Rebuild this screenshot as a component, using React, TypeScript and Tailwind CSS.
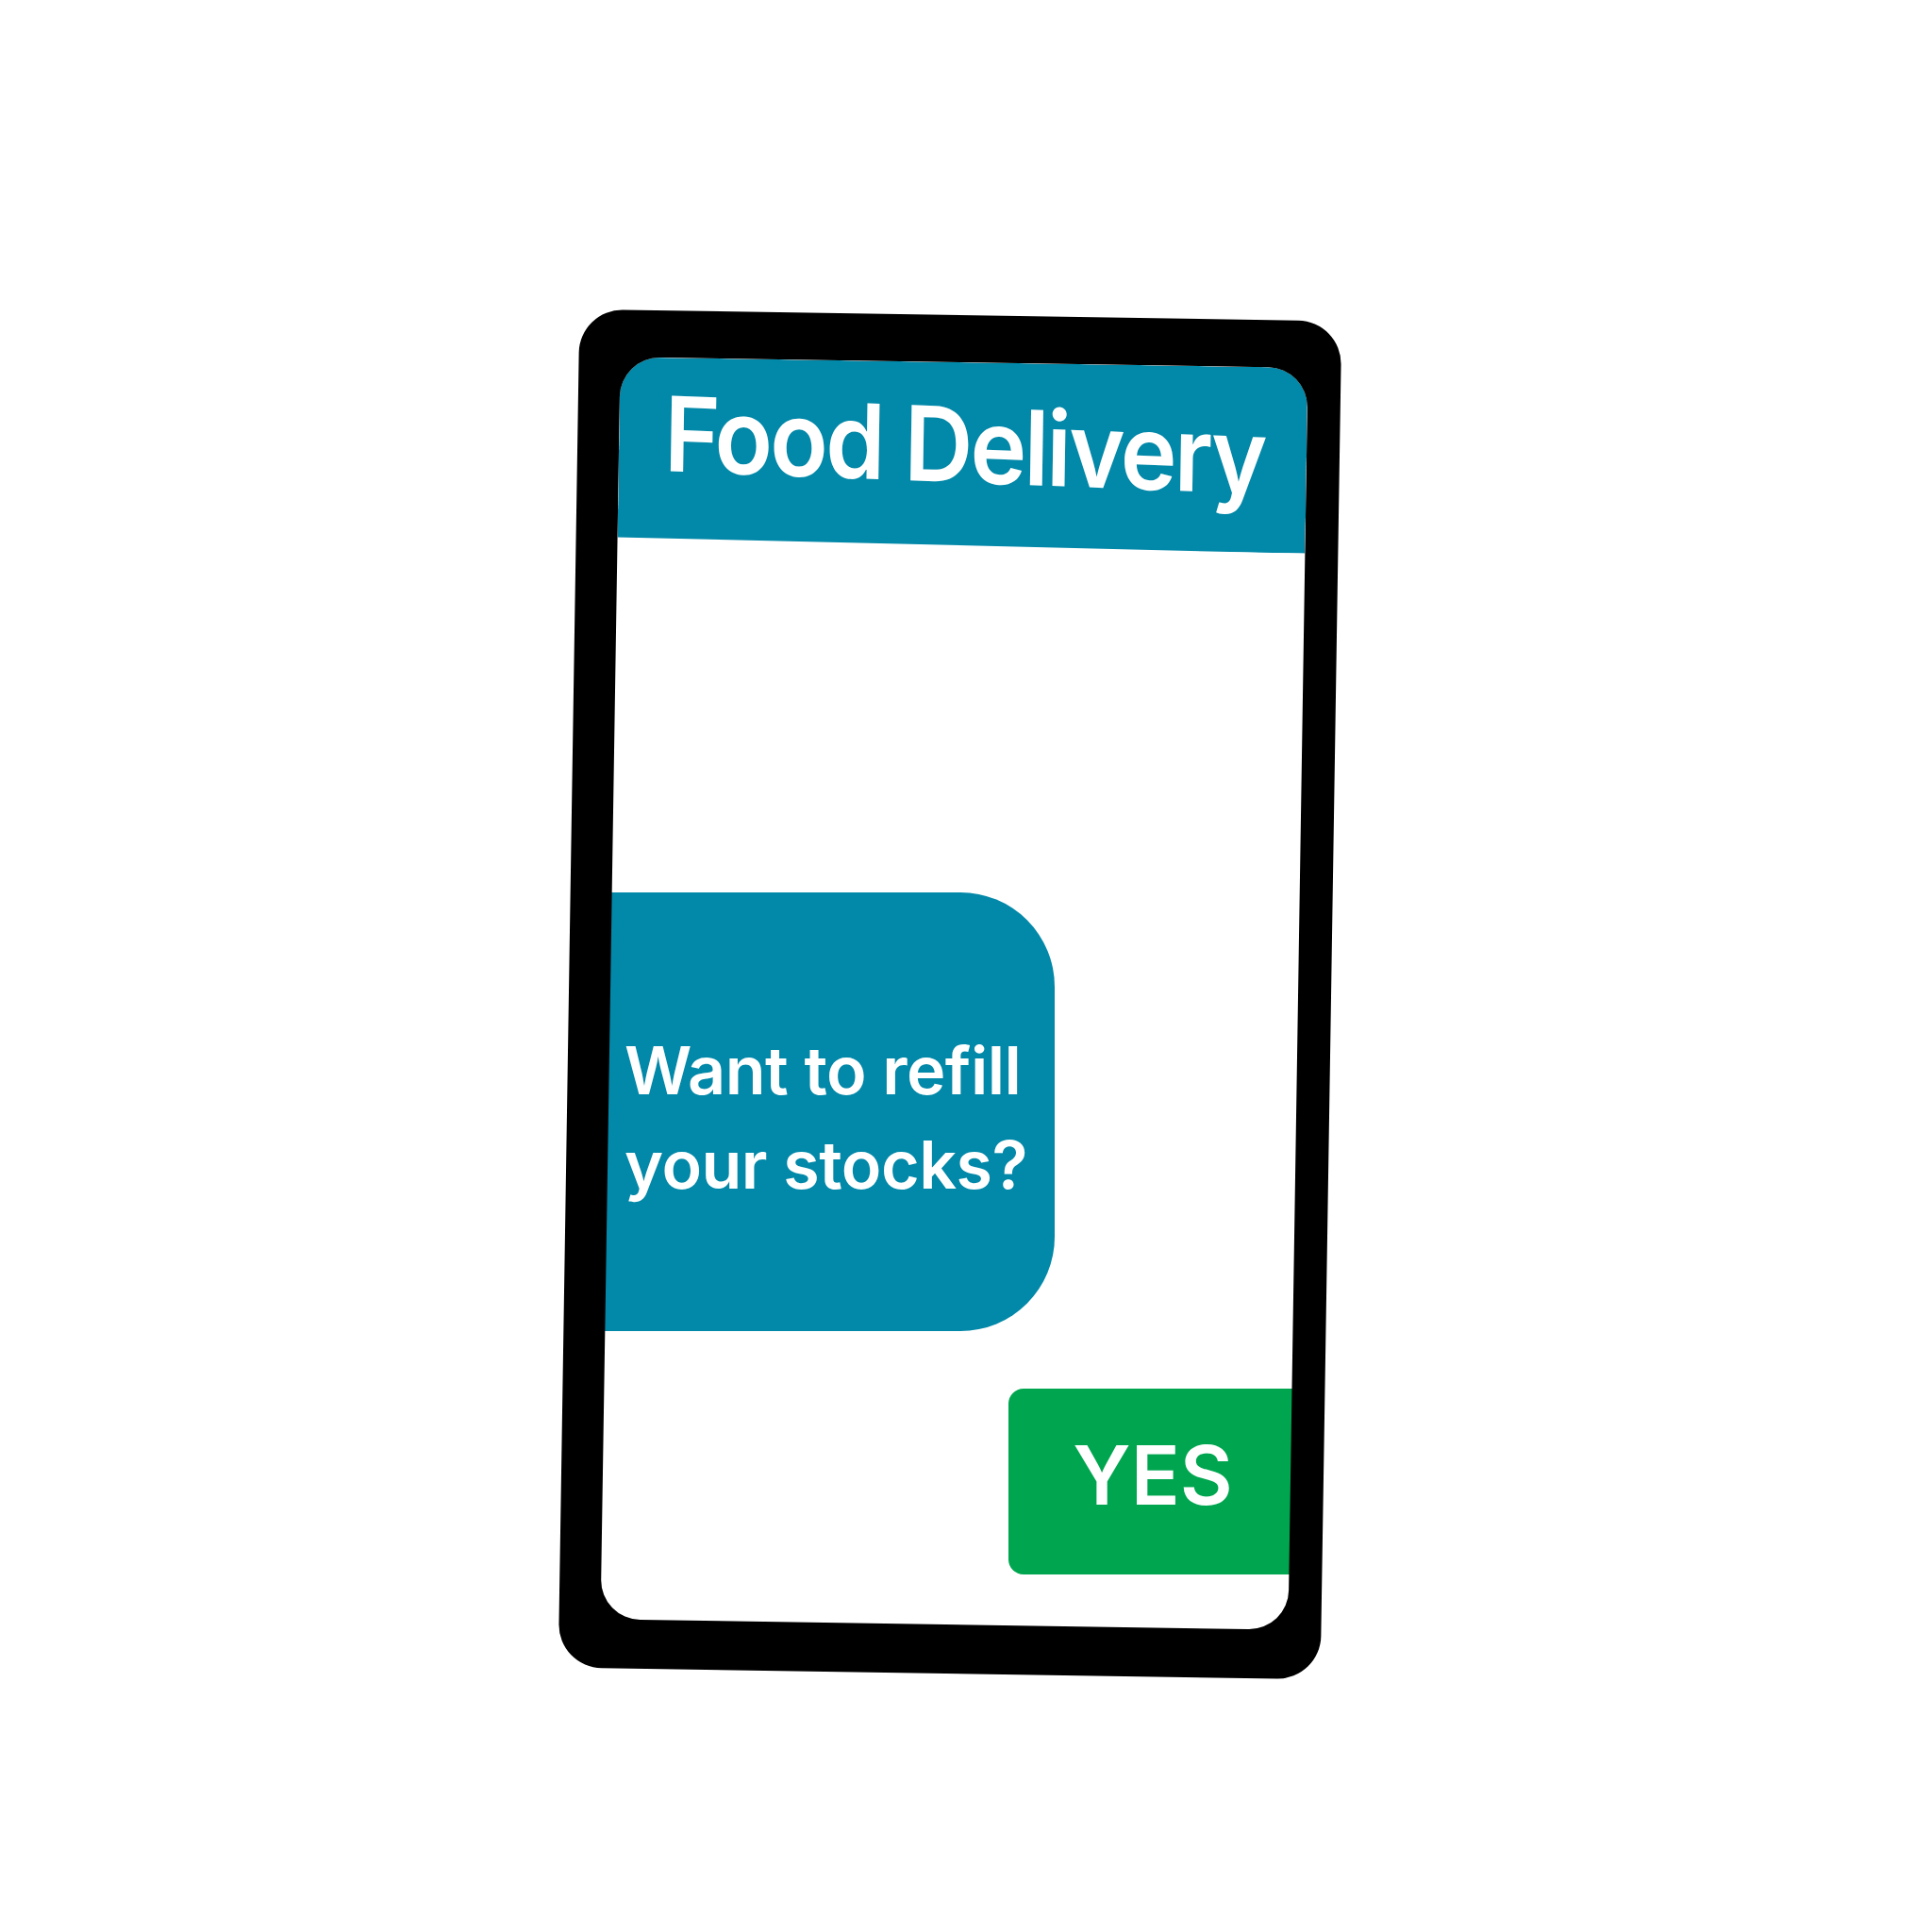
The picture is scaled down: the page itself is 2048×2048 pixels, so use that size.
export default function App() {
  return (
    <div className="relative w-[2048px] h-[2048px] bg-white overflow-hidden" style={{ fontFamily: "Inter, 'Noto Sans', sans-serif" }}>
      {/* phone base: screen + header */}
      <div className="absolute left-[603px] top-[334px] w-[808px] h-[1440px] rotate-[0.9deg]">
        <div className="absolute top-[50px] left-[44px] right-[35px] bottom-[52px] rounded-[42px] bg-white overflow-hidden">
          <div className="h-[197px] bg-[#0288a8] [clip-path:polygon(0_0,100%_0,100%_100%,0_calc(100%-6px))]">
            <div className="pl-[52px] pt-[14px] origin-left skew-y-[1.2deg] scale-x-[0.92] text-white font-semibold text-[110px] leading-[130px] tracking-[-3px] whitespace-nowrap">
              Food Delivery
            </div>
          </div>
        </div>
      </div>

      {/* chat content, axis-aligned on the canvas */}
      <div className="absolute left-[630px] top-[946px] w-[755px] flex flex-col gap-[61px]">
        <div className="w-[488px] h-[465px] rounded-r-[100px] bg-[#0288a8] pl-[32px] pt-[139px] text-white font-semibold text-[70px] leading-[100px] tracking-[-0.5px]">
          <div>Want to refill</div>
          <div>your stocks?</div>
        </div>
        <div className="self-end w-[316px] h-[197px] rounded-l-[16px] bg-[#00a64f] flex items-center justify-center pr-[10px] pb-[13px] text-white font-semibold text-[86px] leading-none">
          YES
        </div>
      </div>

      {/* frame overlay */}
      <div className="pointer-events-none absolute left-[603px] top-[334px] w-[808px] h-[1440px] rotate-[0.9deg] rounded-[46px] overflow-hidden">
        <div className="absolute top-[50px] left-[44px] right-[35px] bottom-[52px] rounded-[42px] shadow-[0_0_0_90px_#000]" />
      </div>
    </div>
  );
}
